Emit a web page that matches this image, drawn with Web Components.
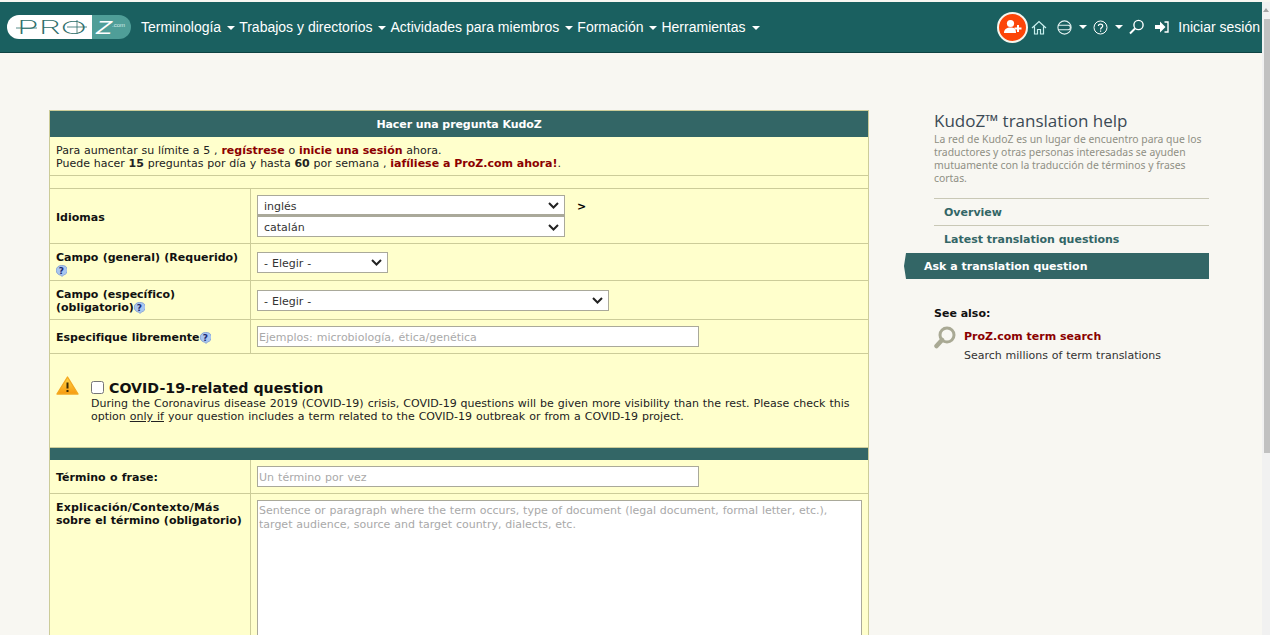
<!DOCTYPE html>
<html lang="es">
<head>
<meta charset="utf-8">
<title>Hacer una pregunta KudoZ</title>
<style>
    html, body {
        margin: 0;
        height: 100%;
        overflow: hidden;
        background-color: #f8f7f2;
    }
    body {
        font-family: "DejaVu Sans", Verdana, sans-serif;
        font-size: 11px;
        color: #222222;
    }
    .Page {
        width: 1262px;
        height: 635px;
        overflow: hidden;
    }
</style>
</head>
<body>

<template id="site-header-template">
    <style>
        :host {
            display: flex;
            align-items: center;
            height: 50px;
            margin-top: 2px;
            background-color: #1a6060;
            border-bottom: 1px solid #0f4343;
            font-family: "Liberation Sans", Arial, sans-serif;
            font-size: 14px;
            color: #ffffff;
        }
        .Logo {
            margin-left: 7px;
            margin-right: 10px;
            flex: none;
        }
        .Nav {
            display: flex;
            align-items: center;
            gap: 4px;
        }
        .Tools {
            display: flex;
            align-items: center;
            margin-left: auto;
            padding-right: 2px;
        }
        .Caret {
            display: inline-block;
            width: 0;
            height: 0;
            margin-left: 6px;
            vertical-align: middle;
            border-left: 4px solid transparent;
            border-right: 4px solid transparent;
            border-top: 4px solid #ffffff;
        }
        .Join {
            display: flex;
            align-items: center;
            justify-content: center;
            width: 27px;
            height: 27px;
            border-radius: 50%;
            background-color: #fc4508;
            border: 2px solid #f6f6ee;
            margin-right: 3px;
        }
        svg {
            display: block;
            flex: none;
        }
    </style>
    <svg class="Logo" width="124" height="24" viewBox="0 0 124 24">
        <path d="M12 0H85V24H12A12 12 0 0 1 12 0Z" fill="#ffffff"/>
        <path d="M85 0H112A12 12 0 0 1 112 24H85Z" fill="#4f9e98"/>
        <text x="10" y="18.5" font-family="Inter, Lato, sans-serif" font-size="18" font-weight="200" fill="#2f6f6c" textLength="70" lengthAdjust="spacingAndGlyphs">PRO</text>
        <path d="M9 13H30M60 12H80M70 5V19" stroke="#2f6f6c" stroke-width="0.8" fill="none"/>
        <text x="89" y="19" font-family="Liberation Sans, sans-serif" font-size="19" font-style="italic" fill="#ffffff" textLength="16" lengthAdjust="spacingAndGlyphs">Z</text>
        <text x="105" y="12" font-family="Liberation Sans, sans-serif" font-size="6" fill="#d7ecea">.com</text>
    </svg>
    <nav class="Nav">
        <span>Terminología<i class="Caret"></i></span>
        <span>Trabajos y directorios<i class="Caret"></i></span>
        <span>Actividades para miembros<i class="Caret"></i></span>
        <span>Formación<i class="Caret"></i></span>
        <span>Herramientas<i class="Caret"></i></span>
    </nav>
    <div class="Tools">
        <span class="Join">
            <svg width="20" height="16" viewBox="0 0 20 16">
                <circle cx="7.5" cy="4.5" r="3.6" fill="#ffffff"/>
                <path d="M1 14C1 10 4 8.5 7.5 8.5S13 9.5 13 14Z" fill="#ffffff"/>
                <path d="M15 6V13M11.5 9.5H18.5" stroke="#ffffff" stroke-width="2"/>
            </svg>
        </span>
        <svg width="16" height="15" viewBox="0 0 16 15" fill="none" stroke="#c8f0ee" stroke-width="1.2">
            <path d="M1 8L8 1.5L15 8M3.5 6.5V14H6.5V9.5H9.5V14H12.5V6.5"/>
        </svg>
        <svg style="margin-left:10px" width="15" height="15" viewBox="0 0 15 15" fill="none" stroke="#e4f2f1" stroke-width="1.1">
            <circle cx="7.5" cy="7.5" r="6.6"/>
            <path d="M1 5.3H11.2A2.2 2.2 0 0 1 11.2 9.7H1"/>
        </svg>
        <i class="Caret" style="margin-left:7px"></i>
        <svg style="margin-left:6px" width="15" height="15" viewBox="0 0 15 15" fill="none" stroke="#ffffff" stroke-width="1">
            <circle cx="7.5" cy="7.5" r="6.5"/>
            <path d="M5.4 6C5.4 3.4 9.7 3.4 9.7 6C9.7 7.6 7.6 7.5 7.6 9.4M7.6 10.4V11.7" stroke-width="1.2"/>
        </svg>
        <i class="Caret" style="margin-left:7px"></i>
        <svg style="margin-left:6px" width="15" height="16" viewBox="0 0 15 16" fill="none" stroke="#ffffff">
            <circle cx="9.5" cy="6" r="4.6" stroke-width="1.4"/>
            <path d="M6 9.5L1 14.5" stroke-width="2"/>
        </svg>
        <svg style="margin-left:11px" width="14" height="12" viewBox="0 0 14 12">
            <path d="M0 4H5V0.5L10.5 6L5 11.5V8H0Z" fill="#ffffff"/>
            <path d="M9.5 1H13V11H9.5" fill="none" stroke="#ffffff" stroke-width="1.4"/>
        </svg>
        <span style="margin-left:9px">Iniciar sesión</span>
    </div>
</template>

<template id="form-row-template">
    <style>
        :host {
            display: grid;
            grid-template-columns: 201px 1fr;
            border-bottom: 1px solid #cccc99;
            min-height: var(--row-height, 0);
        }
        .Label {
            display: flex;
            flex-direction: column;
            justify-content: var(--label-align, center);
            padding: var(--label-padding, 1px 6px 0);
            border-right: 1px solid #cccc99;
            font-weight: bold;
            line-height: 13px;
            color: #111111;
        }
        .Field {
            display: flex;
            align-items: var(--field-align, center);
            padding: var(--field-padding, 0 6px);
        }
    </style>
    <div class="Label"><div><slot name="label"></slot></div></div>
    <div class="Field"><slot></slot></div>
</template>

<template id="help-mark-template">
    <style>
        :host {
            display: inline-block;
            width: 11px;
            height: 11px;
            vertical-align: -2px;
        }
        svg {
            display: block;
        }
        text {
            font: bold 9px "DejaVu Sans", sans-serif;
        }
    </style>
    <svg width="11" height="12" viewBox="0 0 11 12">
        <path d="M5.5 0.5A5 4.8 0 0 1 7.5 10L6 11.5L5 10.2A5 4.8 0 0 1 5.5 0.5Z" fill="#a9c6f0" stroke="#6f8fd0" stroke-width="0.7"/>
        <text x="2.8" y="8.6" fill="#1d2c70">?</text>
    </svg>
</template>

<template id="kudoz-form-template">
    <style>
        :host {
            display: block;
            flex: none;
            width: 820px;
            height: 600px;
            box-sizing: border-box;
            background-color: #ffffcc;
            border: 1px solid #cccc99;
            border-bottom: 0;
            font-size: 11px;
            color: #222222;
            word-spacing: 0.5px;
        }
        .Title {
            display: flex;
            align-items: center;
            justify-content: center;
            height: 26px;
            background-color: #336666;
            color: #ffffff;
            font-weight: bold;
            word-spacing: 0;
            letter-spacing: -0.08px;
        }
        .Note {
            box-sizing: border-box;
            height: 39px;
            padding: 7px 6px 0;
            line-height: 13px;
            border-bottom: 1px solid #cccc99;
            word-spacing: 0.3px;
        }
        .Note b {
            word-spacing: 0;
        }
        .Spacer {
            height: 12px;
            border-bottom: 1px solid #cccc99;
        }
        .Band {
            height: 12px;
            background-color: #336666;
            border-top: 1px solid #cccc99;
        }
        .Covid {
            display: flex;
            box-sizing: border-box;
            height: 93px;
            padding: 22px 6px 0;
        }
        .Covid svg {
            flex: none;
            margin-right: 12px;
        }
        .Covid h3 {
            display: flex;
            align-items: center;
            margin: 3px 0 0;
            font-size: 14.2px;
            line-height: 18px;
            color: #111111;
            word-spacing: 0;
        }
        .Covid p {
            margin: 0;
            line-height: 13px;
        }
        .Covid p span {
            display: block;
            white-space: nowrap;
        }
        .Covid input {
            margin: -1px 5px 0 0;
            width: 13px;
            height: 13px;
        }
        .Fake {
            display: flex;
            align-items: center;
            justify-content: space-between;
            box-sizing: border-box;
            height: 21px;
            padding: 3px 5px 0 6px;
            background-color: #ffffff;
            border: 1px solid #aaa99a;
            color: #333333;
            word-spacing: 0.5px;
        }
        .Fake svg {
            flex: none;
            margin-top: -2px;
        }
        .Fake.Empty {
            padding: 1px 0 0 1px;
            color: #a9a9a9;
            word-spacing: 0.6px;
        }
        .Langs {
            display: flex;
            gap: 12px;
        }
        .Stack .Fake:first-child {
            border-bottom-width: 2px;
        }
        .Stack .Fake + .Fake {
            padding-top: 1px;
        }
        .Stack .Fake + .Fake svg {
            margin-top: 0;
        }
        .Area {
            box-sizing: border-box;
            width: 605px;
            height: 200px;
            padding: 3px 1px 2px;
            background-color: #ffffff;
            border: 1px solid #aaa99a;
            color: #a9a9a9;
            line-height: 14px;
            word-spacing: 0.3px;
        }
    </style>
    <div class="Title">Hacer una pregunta KudoZ</div>
    <div class="Note">
        Para aumentar su límite a 5 , <b style="color:#8b0000">regístrese</b> o <b style="color:#8b0000">inicie una sesión</b> ahora.<br>
        Puede hacer <b>15</b> preguntas por día y hasta <b>60</b> por semana , <b style="color:#8b0000">iafíliese a ProZ.com ahora!</b>.
    </div>
    <div class="Spacer"></div>
    <form-row style="--row-height:54px;--label-padding:2px 6px 0">
        <span slot="label">Idiomas</span>
        <div class="Langs">
            <div class="Stack" style="width:308px">
                <div class="Fake">inglés<svg width="11" height="7" viewBox="0 0 11 7"><path d="M1 1L5.5 5.5L10 1" fill="none" stroke="#222" stroke-width="2"/></svg></div>
                <div class="Fake">catalán<svg width="11" height="7" viewBox="0 0 11 7"><path d="M1 1L5.5 5.5L10 1" fill="none" stroke="#222" stroke-width="2"/></svg></div>
            </div>
            <b style="margin-top:5px;color:#000">&gt;</b>
        </div>
    </form-row>
    <form-row style="--row-height:36px;--label-align:flex-start;--label-padding:7px 6px 0">
        <span slot="label">Campo (general) (Requerido)<br><help-mark></help-mark></span>
        <div class="Fake" style="width:131px">- Elegir -<svg width="11" height="7" viewBox="0 0 11 7"><path d="M1 1L5.5 5.5L10 1" fill="none" stroke="#222" stroke-width="2"/></svg></div>
    </form-row>
    <form-row style="--row-height:38px">
        <span slot="label">Campo (específico)<br>(obligatorio)<help-mark></help-mark></span>
        <div class="Fake" style="width:352px">- Elegir -<svg width="11" height="7" viewBox="0 0 11 7"><path d="M1 1L5.5 5.5L10 1" fill="none" stroke="#222" stroke-width="2"/></svg></div>
    </form-row>
    <form-row style="--row-height:33px">
        <span slot="label">Especifique libremente<help-mark></help-mark></span>
        <div class="Fake Empty" style="width:442px">Ejemplos: microbiología, ética/genética</div>
    </form-row>
    <div class="Covid">
        <svg width="23" height="19" viewBox="0 0 23 19">
            <defs>
                <linearGradient id="warn" x1="0" y1="0" x2="0" y2="1">
                    <stop offset="0" stop-color="#ffd84a"/>
                    <stop offset="1" stop-color="#f79a10"/>
                </linearGradient>
            </defs>
            <path d="M11.5 1L22 18H1Z" fill="url(#warn)" stroke="#f4a820" stroke-width="1.4" stroke-linejoin="round"/>
            <path d="M11.5 6.5V12.5M11.5 14V16" stroke="#3a2a00" stroke-width="2"/>
        </svg>
        <div>
            <h3><input type="checkbox">COVID-19-related question</h3>
            <p>
                <span>During the Coronavirus disease 2019 (COVID-19) crisis, COVID-19 questions will be given more visibility than the rest. Please check this</span>
                <span>option <u>only if</u> your question includes a term related to the COVID-19 outbreak or from a COVID-19 project.</span>
            </p>
        </div>
    </div>
    <div class="Band"></div>
    <form-row style="--row-height:33px">
        <span slot="label">Término o frase:</span>
        <div class="Fake Empty" style="width:442px">Un término por vez</div>
    </form-row>
    <form-row style="--row-height:140px;--label-align:flex-start;--label-padding:7px 6px 0;--field-align:flex-start;--field-padding:6px 6px 0">
        <span slot="label"><span style="letter-spacing:0.2px">Explicación/Contexto/Más</span><br>sobre el término (obligatorio)</span>
        <div class="Area">Sentence or paragraph where the term occurs, type of document (legal document, formal letter, etc.), target audience, source and target country, dialects, etc.</div>
    </form-row>
</template>

<template id="help-sidebar-template">
    <style>
        :host {
            display: block;
            flex: none;
            width: 305px;
            margin-left: 35px;
            font-size: 11px;
        }
        .Inner {
            padding-left: 30px;
        }
        h2 {
            margin: 0 0 2px;
            padding-top: 1px;
            font: normal 17px/20px "Open Sans", "DejaVu Sans", sans-serif;
            color: #3c4a55;
        }
        .Intro {
            margin: 0 0 13px;
            width: 275px;
            line-height: 13px;
            font-family: "Noto Sans", "DejaVu Sans", sans-serif;
            font-size: 10.4px;
            color: #8f8f84;
        }
        .Link {
            display: flex;
            align-items: center;
            box-sizing: border-box;
            height: 27px;
            margin-left: 30px;
            padding-left: 10px;
            border-top: 1px solid #c9c8b6;
            font-weight: bold;
            color: #336666;
        }
        .Link.Tall {
            height: 28px;
        }
        .Active {
            height: 26px;
            margin-left: 0;
            padding-left: 20px;
            border-top: 0;
            background-color: #336666;
            color: #ffffff;
            clip-path: polygon(2px 0, 100% 0, 100% 100%, 2px 100%, 0 50%);
        }
        h4 {
            margin: 28px 0 9px 30px;
            font-size: 11px;
            line-height: 13px;
            color: #111111;
        }
        .Search {
            display: flex;
            gap: 8px;
            margin-left: 30px;
        }
        .Search svg {
            flex: none;
            margin-top: -3px;
        }
        .Search b {
            display: block;
            color: #8b0000;
            line-height: 16px;
            margin-bottom: 4px;
        }
        .Search span {
            color: #333333;
            word-spacing: 0.3px;
        }
    </style>
    <div class="Inner">
        <h2>KudoZ™ translation help</h2>
        <p class="Intro">La red de KudoZ es un lugar de encuentro para que los traductores y otras personas interesadas se ayuden mutuamente con la traducción de términos y frases cortas.</p>
    </div>
    <div class="Link">Overview</div>
    <div class="Link Tall">Latest translation questions</div>
    <div class="Link Active">Ask a translation question</div>
    <h4>See also:</h4>
    <div class="Search">
        <svg width="22" height="23" viewBox="0 0 22 23" fill="none" stroke="#a9a994">
            <circle cx="13" cy="9" r="7" stroke-width="3"/>
            <path d="M8 14L2.5 20" stroke-width="4.5" stroke-linecap="round"/>
        </svg>
        <div>
            <b>ProZ.com term search</b>
            <span>Search millions of term translations</span>
        </div>
    </div>
</template>

<template id="page-scrollbar-template">
    <style>
        :host {
            position: fixed;
            top: 2px;
            right: 0;
            bottom: 0;
            width: 8px;
            background-color: #f1f1f1;
        }
        .Arrow {
            position: absolute;
            top: 6px;
            left: 1px;
            width: 0;
            height: 0;
            border-left: 3px solid transparent;
            border-right: 3px solid transparent;
            border-bottom: 4px solid #a3a3a3;
        }
        .Thumb {
            position: absolute;
            top: 17px;
            left: 2px;
            right: 0;
            height: 434px;
            background-color: #c1c1c1;
        }
    </style>
    <div class="Arrow"></div>
    <div class="Thumb"></div>
</template>

<template id="page-main-template">
    <style>
        :host {
            display: flex;
            align-items: flex-start;
            padding: 57px 0 0 49px;
        }
    </style>
    <slot></slot>
</template>

<div class="Page">
    <site-header></site-header>
    <page-main>
        <kudoz-form></kudoz-form>
        <help-sidebar></help-sidebar>
    </page-main>
</div>
<page-scrollbar></page-scrollbar>

<script>
    // every element just clones its template into an open shadow root
    class TemplateElement extends HTMLElement {
        constructor() {
            super();
            this.attachShadow({ mode: "open" });
            const template = document.getElementById(this.constructor.templateId);
            this.shadowRoot.appendChild(template.content.cloneNode(true));
        }
    }

    class SiteHeader extends TemplateElement { static templateId = "site-header-template"; }
    class FormRow extends TemplateElement { static templateId = "form-row-template"; }
    class HelpMark extends TemplateElement { static templateId = "help-mark-template"; }
    class KudozForm extends TemplateElement { static templateId = "kudoz-form-template"; }
    class HelpSidebar extends TemplateElement { static templateId = "help-sidebar-template"; }
    class PageScrollbar extends TemplateElement { static templateId = "page-scrollbar-template"; }
    class PageMain extends TemplateElement { static templateId = "page-main-template"; }

    customElements.define("site-header", SiteHeader);
    customElements.define("form-row", FormRow);
    customElements.define("help-mark", HelpMark);
    customElements.define("kudoz-form", KudozForm);
    customElements.define("help-sidebar", HelpSidebar);
    customElements.define("page-scrollbar", PageScrollbar);
    customElements.define("page-main", PageMain);
</script>
</body>
</html>
